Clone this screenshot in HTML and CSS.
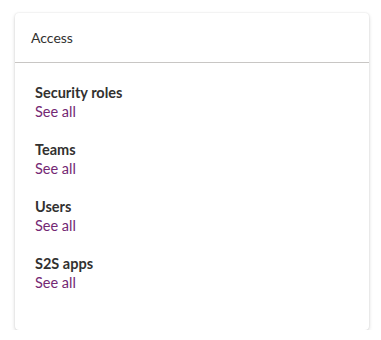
FILE: index.html
```html
<!DOCTYPE html>
<html lang="en">
<head>
  <meta charset="UTF-8" />
  <title>Access</title>
  <link rel="stylesheet" href="styles.css">
</head>
<body>
  <div class="card">
    <div class="card-header">Access</div>
    <div class="card-body">
      <div class="group">
        <div class="group-title">Security roles</div>
        <a class="see-all" href="#">See all</a>
      </div>
      <div class="group">
        <div class="group-title">Teams</div>
        <a class="see-all" href="#">See all</a>
      </div>
      <div class="group">
        <div class="group-title">Users</div>
        <a class="see-all" href="#">See all</a>
      </div>
      <div class="group">
        <div class="group-title">S2S apps</div>
        <a class="see-all" href="#">See all</a>
      </div>
    </div>
  </div>
</body>
</html>
```

FILE: styles.css
```css
* {
  box-sizing: border-box;
}

body {
  margin: 0;
  padding: 13px 12px 0 15px;
  font-family: Lato, "Noto Sans", sans-serif;
  color: #323130;
  background: #fff;
}

.card {
  width: 354px;
  height: 317px;
  background: #fff;
  border-radius: 4px;
  box-shadow: 0 0 2px rgba(0,0,0,0.12), 0 2px 4px rgba(0,0,0,0.14);
}

.card-header {
  height: 50px;
  display: flex;
  align-items: center;
  padding: 0 16px;
  font-size: 14px;
  border-bottom: 1px solid #c8c6c4;
}

.card-body {
  padding: 21px 20px;
  display: flex;
  flex-direction: column;
  gap: 19px;
}

.group {
  display: flex;
  flex-direction: column;
}

.group-title {
  font-size: 14.5px;
  font-weight: bold;
  line-height: 18px;
}

.see-all {
  font-size: 14.5px;
  line-height: 20px;
  color: #742774;
  text-decoration: none;
}
```
